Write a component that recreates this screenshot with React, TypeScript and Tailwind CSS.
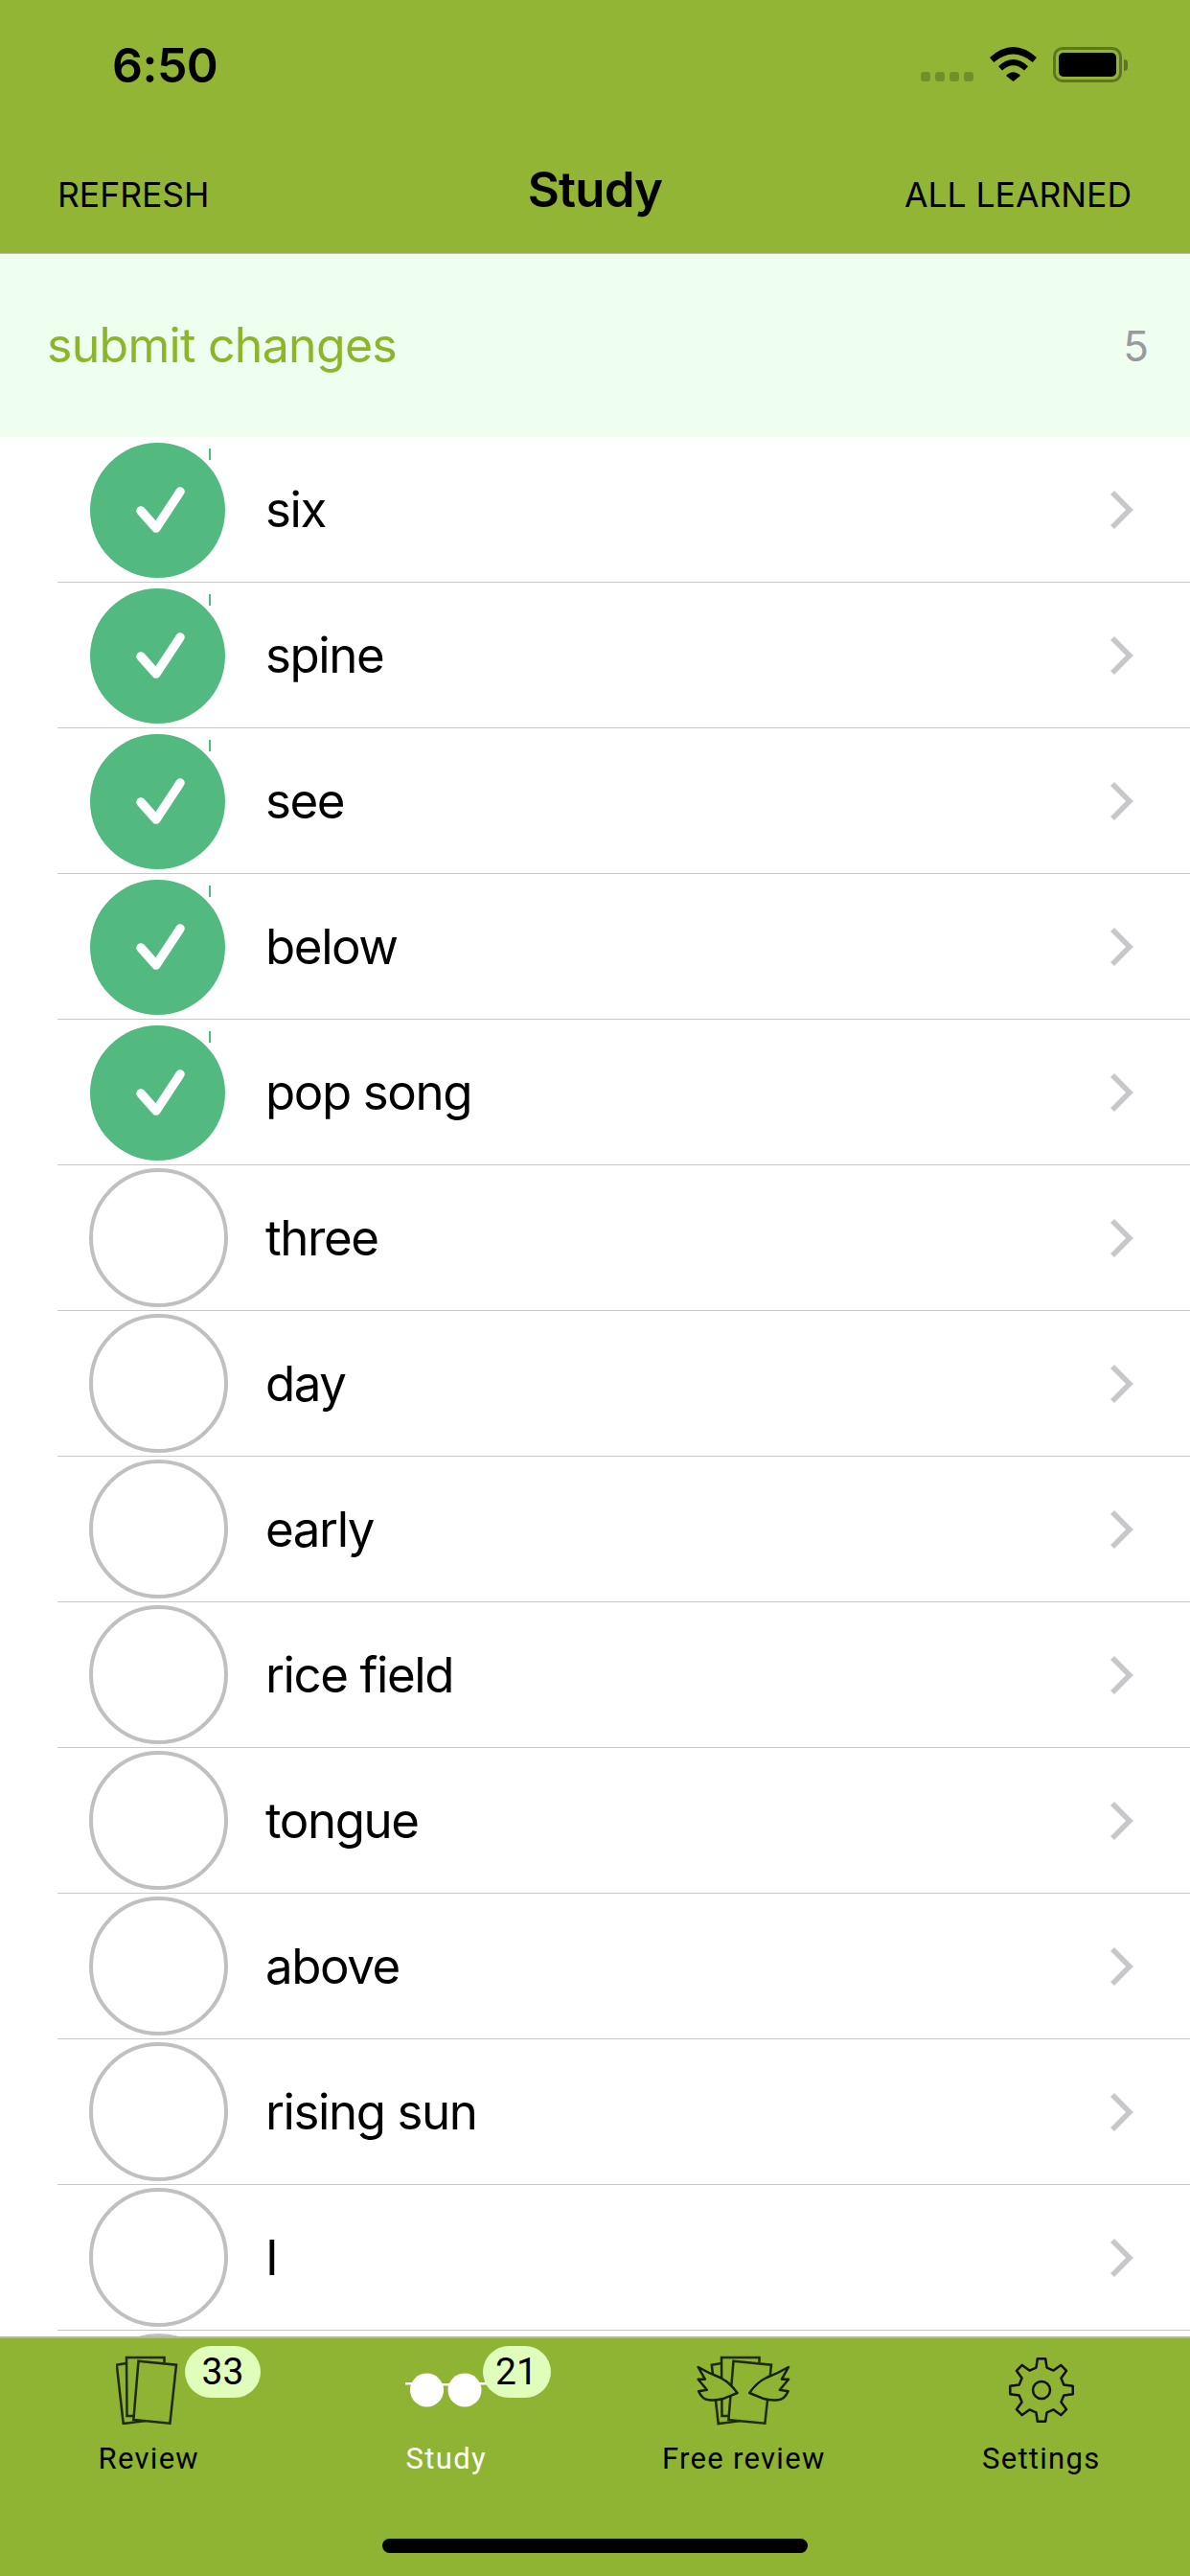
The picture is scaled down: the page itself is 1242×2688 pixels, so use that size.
const words = [
  { label: "six", done: true },
  { label: "spine", done: true },
  { label: "see", done: true },
  { label: "below", done: true },
  { label: "pop song", done: true },
  { label: "three", done: false },
  { label: "day", done: false },
  { label: "early", done: false },
  { label: "rice field", done: false },
  { label: "tongue", done: false },
  { label: "above", done: false },
  { label: "rising sun", done: false },
  { label: "I", done: false },
  { label: "", done: false }
];

function gearPath() {
  const points: string[] = [];
  const teeth = 8;
  for (let i = 0; i < teeth; i++) {
    const a = (i / teeth) * Math.PI * 2 - Math.PI / 2;
    const step = (Math.PI * 2) / teeth;
    const corners = [
      [a - step * 0.3, 24],
      [a - step * 0.16, 33],
      [a + step * 0.16, 33],
      [a + step * 0.3, 24]
    ];
    corners.forEach(([angle, r]) => {
      points.push(`${(34 + r * Math.cos(angle)).toFixed(2)} ${(34 + r * Math.sin(angle)).toFixed(2)}`);
    });
  }
  return `M${points.join("L")}Z`;
}

function Cards() {
  return (
    <g fill="none" stroke="#1d2a0a" strokeWidth="2.5">
      <path d="M11 8 L0.8 9.7 L7.7 71 L31 68" />
      <path d="M18 63 L11.5 63 L11 2 L50.5 2 L50.5 7" />
      <path d="M23.5 5.7 L63 9.7 L56.4 70.7 L18.4 67 Z" />
    </g>
  );
}

function ReviewIcon() {
  return (
    <svg width="68" height="72" viewBox="0 0 68 72">
      <Cards />
    </svg>
  );
}

function GlassesIcon() {
  return (
    <svg width="86" height="36" viewBox="0 0 86 36" fill="white">
      <rect x="0" y="10" width="14" height="2.5" />
      <rect x="38" y="11" width="10" height="2.5" />
      <rect x="76" y="10" width="10" height="2.5" />
      <ellipse cx="22.5" cy="18" rx="17.5" ry="17.5" />
      <ellipse cx="62" cy="18" rx="17.5" ry="17.5" />
    </svg>
  );
}

function Wing() {
  return (
    <path
      d="M-13.3 12 L-6.2 24.7 L-13.3 24.7 L-4.2 35.7 L-12.9 37.3 Q-9 46 -2.2 46.3 Q6 47 13.7 44.7 L27.5 39 Q20 28 9.7 23 Q-3 18 -13.3 12 Z"
      fill="#8fb332"
      stroke="#14200a"
      strokeWidth="2.5"
      strokeLinejoin="round"
    />
  );
}

function FreeReviewIcon() {
  return (
    <svg width="96" height="72" viewBox="-14 0 96 72" overflow="visible">
      <Cards />
      <Wing />
      <g transform="translate(67.7 0) scale(-1 1)">
        <Wing />
      </g>
    </svg>
  );
}

function GearIcon() {
  return (
    <svg width="68" height="68" viewBox="0 0 68 68" fill="none" stroke="#111" strokeWidth="2.5" strokeLinejoin="round">
      <path d={gearPath()} />
      <circle cx="34" cy="34" r="9" />
    </svg>
  );
}

function WifiIcon() {
  return (
    <svg width="49" height="36" viewBox="0 0 49 36" fill="black">
      <path d="M0 11 Q24.5 -11 49 11 L44.8 16 Q24.5 -1 4.2 16 Z" />
      <path d="M9 20.2 Q24.5 6 40 20.2 L36 24.6 Q24.5 14 13 24.6 Z" />
      <path d="M17 30 Q24.5 22.5 32 30 L24.5 36 Z" />
    </svg>
  );
}

function StatusBar() {
  return (
    <div className="flex h-[100px] items-start justify-between pl-[117px] pr-[65px] pt-[49px]">
      <span className="font-['Inter','Liberation_Sans',sans-serif] text-[50px] leading-[38px] font-semibold tracking-[-0.5px] text-black">
        6:50
      </span>
      <div className="flex items-start">
        <div className="mr-[17px] mt-[26px] flex gap-[5px]">
          <div className="h-[10px] w-[10px] rounded-[3px] bg-[#738f2a]" />
          <div className="h-[10px] w-[10px] rounded-[3px] bg-[#738f2a]" />
          <div className="h-[10px] w-[10px] rounded-[3px] bg-[#738f2a]" />
          <div className="h-[10px] w-[10px] rounded-[3px] bg-[#738f2a]" />
        </div>
        <WifiIcon />
        <div className="ml-[17px] flex items-center">
          <div className="flex h-[37px] w-[72px] items-center justify-center rounded-[10px] border-[3px] border-[#5f7425]">
            <div className="h-[25px] w-[60px] rounded-[5px] bg-black" />
          </div>
          <div className="ml-[2px] h-[12px] w-[4px] rounded-r-[4px] bg-[#5f7425]" />
        </div>
      </div>
    </div>
  );
}

function WordRow({ label, done }: { label: string; done: boolean }) {
  return (
    <div className="ml-[60px] flex h-[152px] items-center border-b border-[#c8c8c8]">
      <div className="flex w-[217px] shrink-0 pl-[33px]">
        {done ? (
          <div className="relative ml-[1px] mt-[1px] h-[141px] w-[141px] rounded-full bg-[#52b980]">
            <svg width="141" height="141" viewBox="0 0 141 141" fill="none" stroke="white" strokeWidth="9.5" strokeLinecap="round" strokeLinejoin="round">
              <path d="M53 71 L69 89 L94 51" />
            </svg>
            <div className="absolute left-[124px] top-[6px] h-[12px] w-[1.5px] bg-[#52b980]" />
          </div>
        ) : (
          <div className="h-[145px] w-[145px] rounded-full border-[4px] border-[#c0c0c0]" />
        )}
      </div>
      <span className="font-['Inter','Liberation_Sans',sans-serif] text-[51px] leading-none tracking-[-1.4px] text-black">
        {label}
      </span>
      <svg className="ml-auto mr-[59px]" width="24" height="40" viewBox="0 0 24 40" fill="none" stroke="#c7c7cc" strokeWidth="5.5">
        <path d="M2 2 L20 20 L2 38" />
      </svg>
    </div>
  );
}

function Tab({
  label,
  active,
  badge,
  children
}: {
  label: string;
  active?: boolean;
  badge?: string;
  children: React.ReactNode;
}) {
  return (
    <div className="relative flex flex-col items-center pt-[17px]">
      <div className="flex h-[74px] items-center justify-center">{children}</div>
      <span
        className={`mt-[17px] font-['Roboto','Liberation_Sans',sans-serif] text-[31px] leading-[36px] tracking-[1.3px] ${
          active ? "text-white" : "text-black"
        }`}
      >
        {label}
      </span>
      {badge ? (
        <div
          className={`absolute left-[193px] top-[8px] flex h-[54px] items-center justify-center rounded-[27px] bg-[#e0fdbb] font-['Roboto','Liberation_Sans',sans-serif] text-[39px] leading-none text-black ${
            badge === "33" ? "w-[79px]" : "w-[71px]"
          }`}
        >
          {badge}
        </div>
      ) : null}
    </div>
  );
}

export default function App() {
  return (
    <div className="flex h-[2688px] w-[1242px] flex-col overflow-hidden bg-white">
      <header className="h-[265px] shrink-0 border-b border-[#b4b9a6] bg-[#93b535]">
        <StatusBar />
        <div className="relative flex h-[164px] items-start justify-between pl-[60px] pr-[61px] pt-[77px] font-['Inter','Liberation_Sans',sans-serif] text-[35.5px] leading-[54px] text-black">
          <span>REFRESH</span>
          <span className="absolute left-1/2 top-[71px] -translate-x-1/2 text-[51px] font-semibold tracking-[-0.8px]">
            Study
          </span>
          <span>ALL LEARNED</span>
        </div>
      </header>

      <div className="flex h-[191px] shrink-0 items-center justify-between bg-[#eefff0] pl-[49px] pr-[43px]">
        <span className="font-['Inter','Liberation_Sans',sans-serif] text-[50px] tracking-[-0.7px] text-[#8db52a]">
          submit changes
        </span>
        <span className="font-['Inter','Liberation_Sans',sans-serif] text-[44px] text-[#9a9a9e]">5</span>
      </div>

      <div className="min-h-0 flex-1 overflow-hidden">
        {words.map((word, i) => (
          <WordRow key={i} label={word.label} done={word.done} />
        ))}
      </div>

      <nav className="flex h-[250px] shrink-0 flex-col border-t-2 border-[#b3b8a6] bg-[#8fb332]">
        <div className="grid h-[209px] shrink-0 grid-cols-4">
          <Tab label="Review" badge="33">
            <ReviewIcon />
          </Tab>
          <Tab label="Study" badge="21" active>
            <GlassesIcon />
          </Tab>
          <Tab label="Free review">
            <FreeReviewIcon />
          </Tab>
          <Tab label="Settings">
            <GearIcon />
          </Tab>
        </div>
        <div className="flex justify-center">
          <div className="h-[15px] w-[444px] rounded-full bg-black" />
        </div>
      </nav>
    </div>
  );
}
